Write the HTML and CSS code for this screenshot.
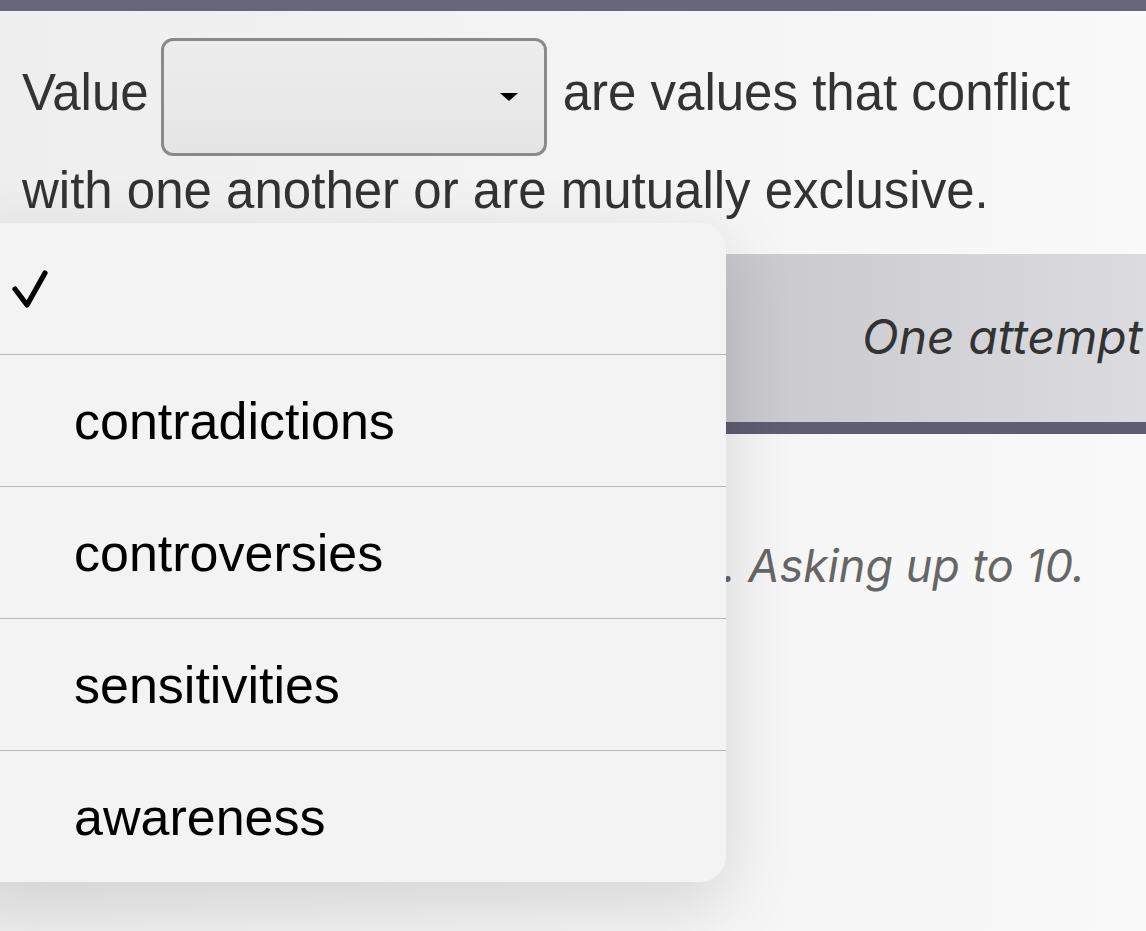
FILE: index.html
```html
<!DOCTYPE html>
<html lang="en">
<head>
    <meta charset="UTF-8">
    <title>Quiz - Values</title>
    <link rel="stylesheet" href="styles.css">
</head>
<body>

<div class="topbar"></div>

<p class="question">
    Value<span class="select-box"><span class="arrow"></span></span>are values that conflict with one another or are mutually exclusive.
</p>

<div class="banner">
    <span class="banner-text">One attempt per question</span>
</div>

<p class="note">One try only. Asking up to 10.</p>

<!-- the open select picker -->
<div class="picker">
    <div class="option selected">
        <span class="check">
            <svg width="38" height="40" viewBox="0 0 38 40">
                <path d="M4 20 L16 36 L34 4" fill="none" stroke="#000" stroke-width="5.2" stroke-linecap="round" stroke-linejoin="round"/>
            </svg>
        </span>
        <span class="label"></span>
    </div>
    <div class="option"><span class="check"></span><span class="label">contradictions</span></div>
    <div class="option"><span class="check"></span><span class="label">controversies</span></div>
    <div class="option"><span class="check"></span><span class="label">sensitivities</span></div>
    <div class="option"><span class="check"></span><span class="label">awareness</span></div>
</div>

</body>
</html>
```

FILE: styles.css
```css
html, body {
    margin: 0;
    height: 931px;
    overflow: hidden;
}

body {
    font-family: "Liberation Sans", Arial, sans-serif;
    background: linear-gradient(to right, #eeeeee, #f9f9f9);
    color: #333;
    position: relative;
}

.topbar {
    height: 11px;
    background-color: #66657a;
}

.question {
    margin: 0;
    padding: 27px 22px 0;
    font-size: 51px;
    line-height: 70px;
}

.select-box {
    display: inline-block;
    vertical-align: middle;
    width: 380px;
    height: 112px;
    margin: 0 16px 0 12px;
    border: 3px solid #8a8a8a;
    border-radius: 12px;
    background: linear-gradient(to bottom, #ededed, #e5e5e5);
    position: relative;
}

.arrow {
    position: absolute;
    right: 26px;
    top: 52px;
    width: 0;
    height: 0;
    border-left: 9px solid transparent;
    border-right: 9px solid transparent;
    border-top: 8px solid #000;
}

.banner {
    margin-top: 28px;
    height: 168px;
    border-bottom: 12px solid #5e5d71;
    background: linear-gradient(to right, #b4b4b9, #c6c6cb 60%, #dcdce0);
    display: flex;
    align-items: center;
    padding-left: 862px;
    white-space: nowrap;
    overflow: hidden;
}

.banner-text {
    font-family: Inter, "Liberation Sans", sans-serif;
    font-style: italic;
    font-size: 48px;
    color: #333;
    padding-bottom: 4px;
}

.note {
    margin: 0;
    padding: 104px 61px 0 0;
    text-align: right;
    white-space: nowrap;
    font-family: Inter, "Liberation Sans", sans-serif;
    font-style: italic;
    font-size: 45px;
    color: #666;
}

.picker {
    position: absolute;
    top: 223px;
    left: -40px;
    width: 766px;
    border-radius: 26px;
    background-color: #f3f3f4;
    box-shadow: 0 22px 70px rgba(0, 0, 0, 0.13);
    overflow: hidden;
}

.option {
    height: 131px;
    display: flex;
    align-items: center;
    padding-left: 51px;
    font-size: 52px;
    color: #000;
}

.option + .option {
    border-top: 1px solid #b5b5b5;
}

.check {
    width: 63px;
    display: flex;
    align-items: center;
}
```
